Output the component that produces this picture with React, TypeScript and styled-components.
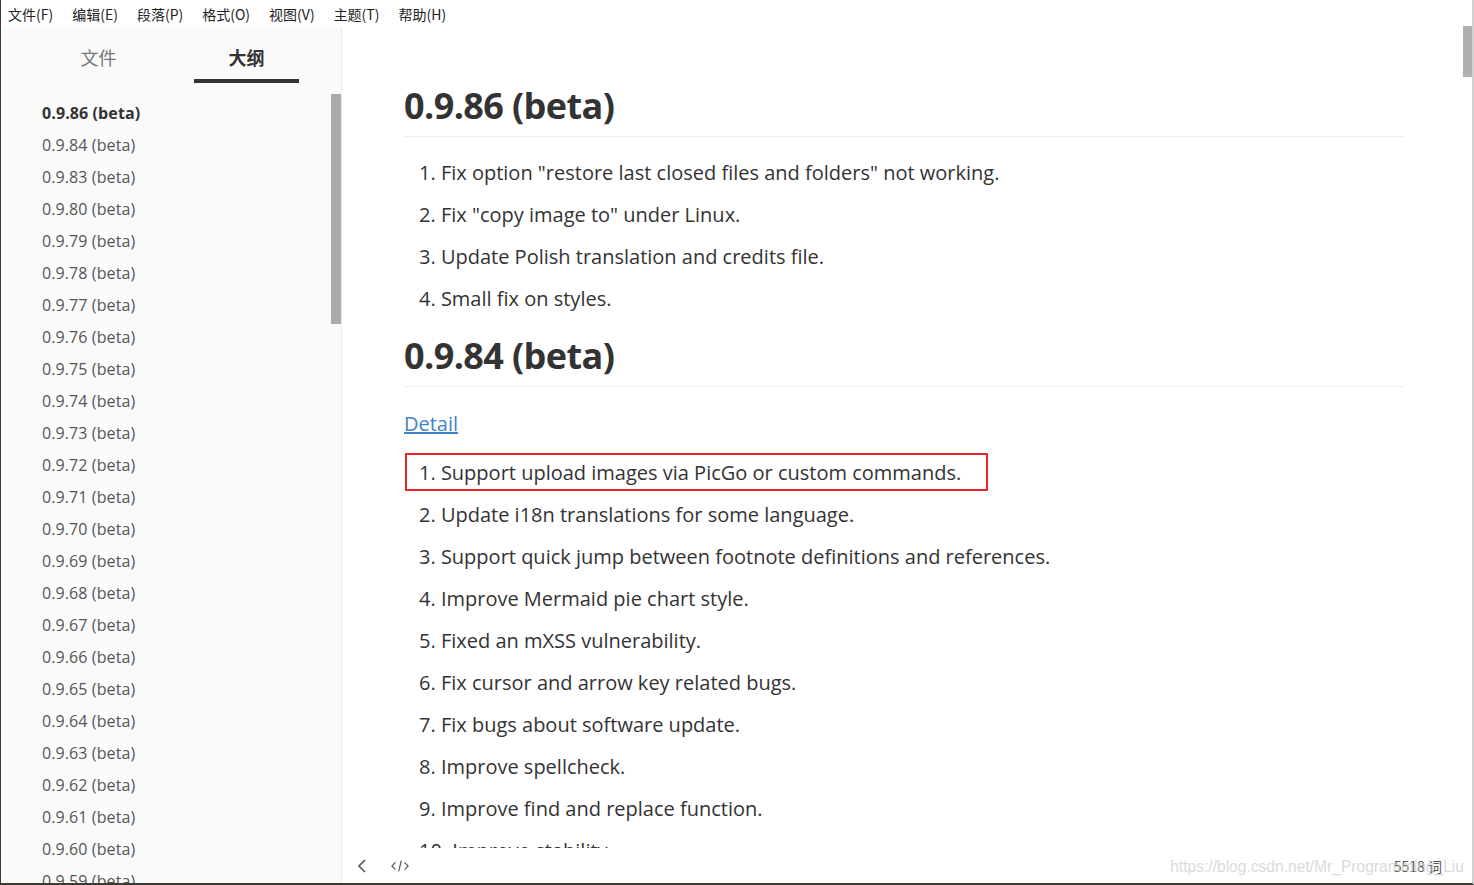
import React from "react";
import styled, { createGlobalStyle } from "styled-components";

const Global = createGlobalStyle`
  html, body { margin: 0; padding: 0; background: #fff; }
  body { width: 1474px; height: 885px; overflow: hidden; }
  * { box-sizing: border-box; }
`;

const Window = styled.div`
  width: 1474px;
  height: 885px;
  display: flex;
  flex-direction: column;
  border-left: 1px solid #3a3a3a;
  border-bottom: 2px solid #3d3a30;
  border-right: 2px solid #d0d0d0;
  background: #fff;
  overflow: hidden;
  position: relative;
`;

const MenuBar = styled.div`
  height: 28px;
  flex: none;
  display: flex;
  align-items: center;
  gap: 19px;
  padding-left: 7px;
  font-family: "Noto Sans CJK SC", "Liberation Sans", sans-serif;
  font-size: 14px;
  color: #222;
  background: #fff;
`;

const MenuItem = styled.span`
  line-height: 28px;
`;

const Body = styled.div`
  flex: 1;
  display: flex;
  min-height: 0;
`;

const Sidebar = styled.aside`
  width: 341px;
  flex: none;
  background: #fafafa;
  border-right: 1px solid #ececec;
  display: flex;
  flex-direction: column;
  position: relative;
  overflow: hidden;
`;

const Tabs = styled.div`
  display: flex;
  height: 56px;
  padding-left: 45px;
  padding-top: 2px;
  flex: none;
`;

const Tab = styled.div<{ $active?: boolean }>`
  width: 105px;
  margin-right: ${(p) => (p.$active ? 0 : "43px")};
  display: flex;
  align-items: center;
  justify-content: center;
  height: 53px;
  padding-top: 5px;
  font-family: "Noto Sans CJK SC", sans-serif;
  font-size: 18px;
  font-weight: ${(p) => (p.$active ? 700 : 400)};
  color: ${(p) => (p.$active ? "#333" : "#777")};
  border-bottom: 4px solid ${(p) => (p.$active ? "#333" : "transparent")};
`;

const Outline = styled.ul`
  list-style: none;
  margin: 0;
  padding: 13px 0 0 41px;
`;

const OutlineItem = styled.li<{ $active?: boolean }>`
  height: 32px;
  line-height: 32px;
  font-family: "Open Sans", sans-serif;
  font-size: 16px;
  letter-spacing: 0.1px;
  white-space: nowrap;
  font-weight: ${(p) => (p.$active ? 700 : 400)};
  color: ${(p) => (p.$active ? "#333" : "#555")};
`;

const SideThumb = styled.div`
  position: absolute;
  right: 0;
  top: 66px;
  width: 10px;
  height: 230px;
  background: #ababab;
`;

const Main = styled.main`
  flex: 1;
  display: flex;
  flex-direction: column;
  position: relative;
  min-width: 0;
`;

const Scroller = styled.div`
  flex: 1;
  overflow: hidden;
  padding-left: 62px;
  min-height: 0;
`;

const Doc = styled.article`
  width: 1000px;
  font-family: "Open Sans", sans-serif;
  color: #333;
  padding-top: 52px;
`;

const H2 = styled.h2`
  margin: 0;
  font-size: 36px;
  font-weight: 700;
  letter-spacing: -0.6px;
  line-height: 52px;
  padding-bottom: 4px;
  border-bottom: 1px solid #eee;
  color: #333;
`;

const List = styled.ol<{ $top: number; $bottom: number }>`
  list-style: none;
  margin: ${(p) => p.$top}px 0 ${(p) => p.$bottom}px;
  padding: 0;
`;

const Item = styled.li<{ $boxed?: boolean }>`
  height: 38px;
  margin: 4px 0 4px 1px;
  display: flex;
  align-items: center;
  padding-left: 12px;
  font-size: 20px;
  white-space: nowrap;
  width: ${(p) => (p.$boxed ? "583px" : "auto")};
  border: 2px solid ${(p) => (p.$boxed ? "#e3242b" : "transparent")};
`;

const Para = styled.p`
  margin: 13px 0 0;
  line-height: 48px;
  font-size: 20px;
`;

const Link = styled.a`
  color: #4183c4;
  text-decoration: underline;
`;

const StatusBar = styled.footer`
  height: 35px;
  flex: none;
  display: flex;
  align-items: center;
  padding: 0 30px 0 11px;
  gap: 20px;
  background: #fff;
  color: #666;
`;

const IconBtn = styled.span`
  display: inline-flex;
  width: 18px;
  justify-content: center;
`;

const WordCount = styled.span`
  margin-left: auto;
  font-family: "Noto Sans CJK SC", sans-serif;
  font-size: 14px;
  color: #555;
`;

const Watermark = styled.span`
  position: absolute;
  right: 8px;
  bottom: 7px;
  font-family: "Liberation Sans", Arial, sans-serif;
  font-size: 15.6px;
  color: rgba(205, 205, 205, 0.75);
  pointer-events: none;
`;

const MainThumb = styled.div`
  position: absolute;
  right: 0;
  top: -2px;
  width: 9px;
  height: 51px;
  background: #b0b0b0;
`;

const menus = ["文件(F)", "编辑(E)", "段落(P)", "格式(O)", "视图(V)", "主题(T)", "帮助(H)"];

const versions = [
  "0.9.86", "0.9.84", "0.9.83", "0.9.80", "0.9.79", "0.9.78", "0.9.77", "0.9.76",
  "0.9.75", "0.9.74", "0.9.73", "0.9.72", "0.9.71", "0.9.70", "0.9.69", "0.9.68",
  "0.9.67", "0.9.66", "0.9.65", "0.9.64", "0.9.63", "0.9.62", "0.9.61", "0.9.60", "0.9.59",
];

const first = [
  'Fix option "restore last closed files and folders" not working.',
  'Fix "copy image to" under Linux.',
  "Update Polish translation and credits file.",
  "Small fix on styles.",
];

const second = [
  "Support upload images via PicGo or custom commands.",
  "Update i18n translations for some language.",
  "Support quick jump between footnote definitions and references.",
  "Improve Mermaid pie chart style.",
  "Fixed an mXSS vulnerability.",
  "Fix cursor and arrow key related bugs.",
  "Fix bugs about software update.",
  "Improve spellcheck.",
  "Improve find and replace function.",
  "Improve stability.",
];

export default function App() {
  return (
    <>
      <Global />
      <Window>
        <MenuBar>
          {menus.map((m) => (
            <MenuItem key={m}>{m}</MenuItem>
          ))}
        </MenuBar>
        <Body>
          <Sidebar>
            <Tabs>
              <Tab>文件</Tab>
              <Tab $active>大纲</Tab>
            </Tabs>
            <Outline>
              {versions.map((v, i) => (
                <OutlineItem key={v} $active={i === 0}>
                  {v} (beta)
                </OutlineItem>
              ))}
            </Outline>
            <SideThumb />
          </Sidebar>
          <Main>
            <MainThumb />
            <Scroller>
              <Doc>
                <H2>0.9.86 (beta)</H2>
                <List $top={16} $bottom={13}>
                  {first.map((t, i) => (
                    <Item key={t}>
                      {i + 1}. {t}
                    </Item>
                  ))}
                </List>
                <H2>0.9.84 (beta)</H2>
                <Para>
                  <Link href="#">Detail</Link>
                </Para>
                <List $top={5} $bottom={0}>
                  {second.map((t, i) => (
                    <Item key={t} $boxed={i === 0}>
                      {i + 1}. {t}
                    </Item>
                  ))}
                </List>
              </Doc>
            </Scroller>
            <StatusBar>
              <IconBtn>
                <svg width="10" height="16" viewBox="0 0 10 16" fill="none" stroke="#555" strokeWidth="1.6">
                  <path d="M8 2 L2 8 L8 14" />
                </svg>
              </IconBtn>
              <IconBtn>
                <svg width="20" height="14" viewBox="0 0 20 14" fill="none" stroke="#555" strokeWidth="1.3">
                  <path d="M5 3 L1 7 L5 11" />
                  <path d="M15 3 L19 7 L15 11" />
                  <path d="M11.5 1 L8.5 13" />
                </svg>
              </IconBtn>
              <WordCount>5518 词</WordCount>
            </StatusBar>
            <Watermark>https://blog.csdn.net/Mr_Programming_Liu</Watermark>
          </Main>
        </Body>
      </Window>
    </>
  );
}
